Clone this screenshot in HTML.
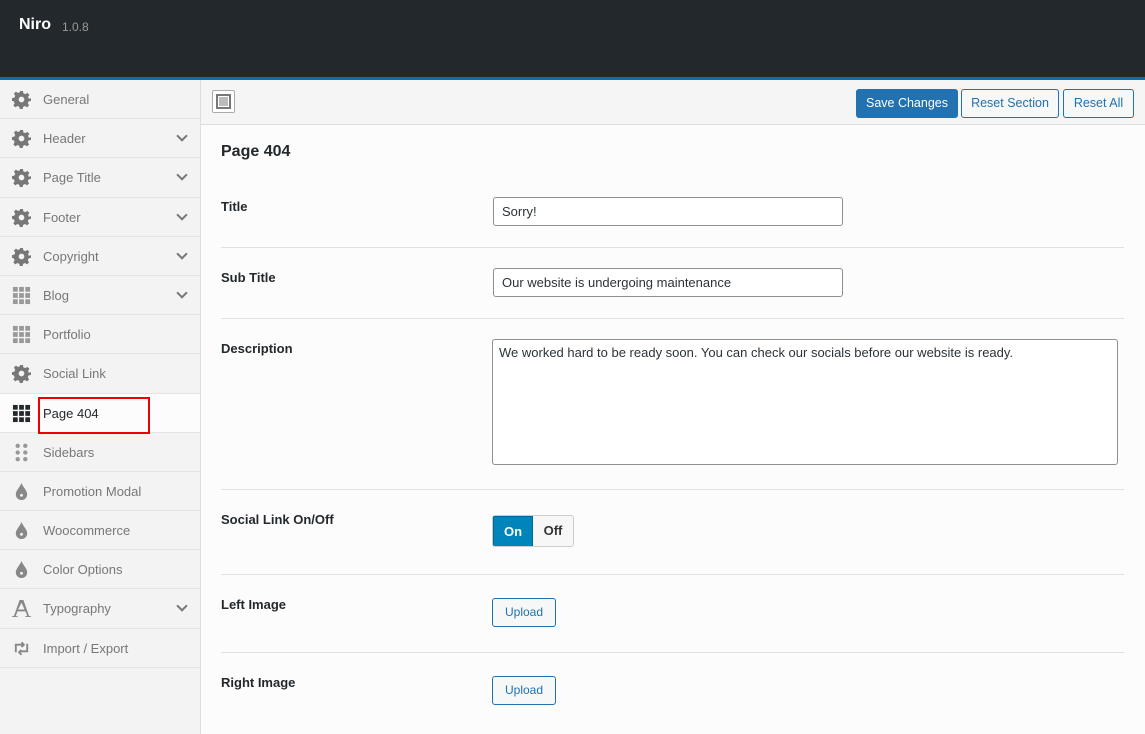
<!DOCTYPE html>
<html><head><style>
*{box-sizing:border-box;margin:0;padding:0}
body{width:1145px;height:734px;overflow:hidden;font-family:"Liberation Sans",sans-serif;font-size:13px;background:#fcfcfc;position:relative;color:#23282d}
.top{position:absolute;left:0;top:0;width:1145px;height:80px;background:#23282d;border-bottom:3px solid #0073aa}
.top b{position:absolute;left:19px;top:16px;color:#fff;font-size:16px}
.top span{position:absolute;left:62px;top:20px;color:#999;font-size:12px}
.side{position:absolute;left:0;top:80px;width:201px;height:654px;background:#f3f3f3;border-right:1px solid #ddd}
.it{height:39.2px;border-bottom:1px solid #e4e4e4;position:relative;color:#777;line-height:39px;padding-left:43px}
.it.act{background:#fcfcfc;color:#23282d}
.ic{position:absolute;left:12px;top:10px;width:19px;height:19px}
.chev{position:absolute;left:178px;top:13px;width:8px;height:8px;border-right:2px solid #777;border-bottom:2px solid #777;transform:rotate(45deg)}
.tb{position:absolute;left:201px;top:80px;right:0;height:45px;background:#f5f5f5;border-bottom:1px solid #ddd}
.btn{position:absolute;top:9px;height:29px;border:1px solid #2271b1;border-radius:3px;color:#2271b1;background:#f6f7f7;font-size:12.5px;line-height:27px;text-align:center}
.lab{position:absolute;left:221px;font-weight:bold;font-size:13px;color:#23282d}
.hr{position:absolute;left:221px;right:21px;height:1px;background:#e1e1e1}
.inp{position:absolute;left:493px;width:350px;height:29px;border:1px solid #8c8f94;border-radius:3px;background:#fff;padding:0 8px;line-height:27px;color:#2c3338}
.up{position:absolute;left:492px;width:64px;height:29px;border:1px solid #2271b1;border-radius:3px;color:#2271b1;background:#f6f7f7;text-align:center;line-height:27px;font-size:12px}
</style></head><body>
<div class="top"><b>Niro</b><span>1.0.8</span></div>
<div class="side">
<div class="it"><svg class="ic" viewBox="0 0 20 20"><path fill="#777" d="M8.5 1h3l.5 2.5 2 .9 2.2-1.4 2.1 2.1-1.4 2.2.9 2L20 8.5v3l-2.5.5-.9 2 1.4 2.2-2.1 2.1-2.2-1.4-2 .9-.5 2.5h-3l-.5-2.5-2-.9-2.2 1.4-2.1-2.1 1.4-2.2-.9-2L0 11.5v-3l2.5-.5.9-2L2 3.8 4.1 1.7l2.2 1.4 2-.9zM10 7a3 3 0 100 6 3 3 0 000-6z"/></svg>General</div>
<div class="it"><svg class="ic" viewBox="0 0 20 20"><path fill="#777" d="M8.5 1h3l.5 2.5 2 .9 2.2-1.4 2.1 2.1-1.4 2.2.9 2L20 8.5v3l-2.5.5-.9 2 1.4 2.2-2.1 2.1-2.2-1.4-2 .9-.5 2.5h-3l-.5-2.5-2-.9-2.2 1.4-2.1-2.1 1.4-2.2-.9-2L0 11.5v-3l2.5-.5.9-2L2 3.8 4.1 1.7l2.2 1.4 2-.9zM10 7a3 3 0 100 6 3 3 0 000-6z"/></svg>Header<i class="chev"></i></div>
<div class="it"><svg class="ic" viewBox="0 0 20 20"><path fill="#777" d="M8.5 1h3l.5 2.5 2 .9 2.2-1.4 2.1 2.1-1.4 2.2.9 2L20 8.5v3l-2.5.5-.9 2 1.4 2.2-2.1 2.1-2.2-1.4-2 .9-.5 2.5h-3l-.5-2.5-2-.9-2.2 1.4-2.1-2.1 1.4-2.2-.9-2L0 11.5v-3l2.5-.5.9-2L2 3.8 4.1 1.7l2.2 1.4 2-.9zM10 7a3 3 0 100 6 3 3 0 000-6z"/></svg>Page Title<i class="chev"></i></div>
<div class="it"><svg class="ic" viewBox="0 0 20 20"><path fill="#777" d="M8.5 1h3l.5 2.5 2 .9 2.2-1.4 2.1 2.1-1.4 2.2.9 2L20 8.5v3l-2.5.5-.9 2 1.4 2.2-2.1 2.1-2.2-1.4-2 .9-.5 2.5h-3l-.5-2.5-2-.9-2.2 1.4-2.1-2.1 1.4-2.2-.9-2L0 11.5v-3l2.5-.5.9-2L2 3.8 4.1 1.7l2.2 1.4 2-.9zM10 7a3 3 0 100 6 3 3 0 000-6z"/></svg>Footer<i class="chev"></i></div>
<div class="it"><svg class="ic" viewBox="0 0 20 20"><path fill="#777" d="M8.5 1h3l.5 2.5 2 .9 2.2-1.4 2.1 2.1-1.4 2.2.9 2L20 8.5v3l-2.5.5-.9 2 1.4 2.2-2.1 2.1-2.2-1.4-2 .9-.5 2.5h-3l-.5-2.5-2-.9-2.2 1.4-2.1-2.1 1.4-2.2-.9-2L0 11.5v-3l2.5-.5.9-2L2 3.8 4.1 1.7l2.2 1.4 2-.9zM10 7a3 3 0 100 6 3 3 0 000-6z"/></svg>Copyright<i class="chev"></i></div>
<div class="it"><svg class="ic" viewBox="0 0 20 20" fill="#999"><rect x="1" y="1" width="5" height="5"/><rect x="7.5" y="1" width="5" height="5"/><rect x="14" y="1" width="5" height="5"/><rect x="1" y="7.5" width="5" height="5"/><rect x="7.5" y="7.5" width="5" height="5"/><rect x="14" y="7.5" width="5" height="5"/><rect x="1" y="14" width="5" height="5"/><rect x="7.5" y="14" width="5" height="5"/><rect x="14" y="14" width="5" height="5"/></svg>Blog<i class="chev"></i></div>
<div class="it"><svg class="ic" viewBox="0 0 20 20" fill="#999"><rect x="1" y="1" width="5" height="5"/><rect x="7.5" y="1" width="5" height="5"/><rect x="14" y="1" width="5" height="5"/><rect x="1" y="7.5" width="5" height="5"/><rect x="7.5" y="7.5" width="5" height="5"/><rect x="14" y="7.5" width="5" height="5"/><rect x="1" y="14" width="5" height="5"/><rect x="7.5" y="14" width="5" height="5"/><rect x="14" y="14" width="5" height="5"/></svg>Portfolio</div>
<div class="it"><svg class="ic" viewBox="0 0 20 20"><path fill="#777" d="M8.5 1h3l.5 2.5 2 .9 2.2-1.4 2.1 2.1-1.4 2.2.9 2L20 8.5v3l-2.5.5-.9 2 1.4 2.2-2.1 2.1-2.2-1.4-2 .9-.5 2.5h-3l-.5-2.5-2-.9-2.2 1.4-2.1-2.1 1.4-2.2-.9-2L0 11.5v-3l2.5-.5.9-2L2 3.8 4.1 1.7l2.2 1.4 2-.9zM10 7a3 3 0 100 6 3 3 0 000-6z"/></svg>Social Link</div>
<div class="it act"><svg class="ic" viewBox="0 0 20 20" fill="#23282d"><rect x="1" y="1" width="5" height="5"/><rect x="7.5" y="1" width="5" height="5"/><rect x="14" y="1" width="5" height="5"/><rect x="1" y="7.5" width="5" height="5"/><rect x="7.5" y="7.5" width="5" height="5"/><rect x="14" y="7.5" width="5" height="5"/><rect x="1" y="14" width="5" height="5"/><rect x="7.5" y="14" width="5" height="5"/><rect x="14" y="14" width="5" height="5"/></svg>Page 404<div style="position:absolute;left:38px;top:3px;width:112px;height:37px;border:2px solid #e00"></div></div>
<div class="it"><svg class="ic" viewBox="0 0 20 20" fill="#999"><circle cx="6" cy="3" r="2.3"/><circle cx="14" cy="3" r="2.3"/><circle cx="6" cy="10" r="2.3"/><circle cx="14" cy="10" r="2.3"/><circle cx="6" cy="17" r="2.3"/><circle cx="14" cy="17" r="2.3"/></svg>Sidebars</div>
<div class="it"><svg class="ic" viewBox="0 0 20 20"><path fill="#888" d="M10 1C8 6 4 9 4 13a6 6 0 0012 0c0-4-4-7-6-12z"/><circle cx="10" cy="14" r="1.5" fill="#f3f3f3"/></svg>Promotion Modal</div>
<div class="it"><svg class="ic" viewBox="0 0 20 20"><path fill="#888" d="M10 1C8 6 4 9 4 13a6 6 0 0012 0c0-4-4-7-6-12z"/><circle cx="10" cy="14" r="1.5" fill="#f3f3f3"/></svg>Woocommerce</div>
<div class="it"><svg class="ic" viewBox="0 0 20 20"><path fill="#888" d="M10 1C8 6 4 9 4 13a6 6 0 0012 0c0-4-4-7-6-12z"/><circle cx="10" cy="14" r="1.5" fill="#f3f3f3"/></svg>Color Options</div>
<div class="it"><svg class="ic" viewBox="0 0 20 20"><path fill="#888" d="M8 1h4l6 17h2v1h-6v-1h2l-1.7-5H5.7L4 18h2v1H0v-1h2zM10 4l-3.6 7h6.8z"/></svg>Typography<i class="chev"></i></div>
<div class="it"><svg class="ic" viewBox="0 0 20 20" fill="none" stroke="#888" stroke-width="2"><path d="M4 14V6h8M10 3.5l2.5 2.5-2.5 2.5M16 5v8H8M10 16.5l-2.5-2.5 2.5-2.5"/></svg>Import / Export</div>
</div>
<div class="tb">
<div style="position:absolute;left:11px;top:10px;width:23px;height:23px;border:1px solid #aaa;border-radius:2px;background:#fff"><div style="margin:3px;width:15px;height:15px;border:2px solid #777;background:#fff"><div style="margin:1px;width:9px;height:9px;background:#bbb"></div></div></div>
<div class="btn" style="left:655px;width:102px;background:#2271b1;color:#fff">Save Changes</div>
<div class="btn" style="left:760px;width:98px">Reset Section</div>
<div class="btn" style="left:862px;width:71px">Reset All</div>
</div>
<div style="position:absolute;left:221px;top:143px;font-size:16px;font-weight:600">Page 404</div>
<div class="lab" style="top:199px">Title</div>
<div class="inp" style="top:197px">Sorry!</div>
<div class="hr" style="top:247px"></div>
<div class="lab" style="top:270px">Sub Title</div>
<div class="inp" style="top:268px">Our website is undergoing maintenance</div>
<div class="hr" style="top:318px"></div>
<div class="lab" style="top:341px">Description</div>
<div class="inp" style="top:339px;left:492px;width:626px;height:126px;line-height:18px;padding:4px 6px">We worked hard to be ready soon. You can check our socials before our website is ready.</div>
<div class="hr" style="top:489px"></div>
<div class="lab" style="top:512px">Social Link On/Off</div>
<div style="position:absolute;left:492px;top:515px;width:82px;height:32px;border:1px solid #ccc;border-radius:3px;background:#f7f7f7;overflow:hidden;font-weight:bold">
<div style="position:absolute;left:0;top:0;width:40px;height:31px;background:#0085ba;border:1px solid #006799;color:#fff;text-align:center;line-height:29px">On</div>
<div style="position:absolute;left:40px;top:0;width:40px;text-align:center;line-height:30px;color:#333">Off</div></div>
<div class="hr" style="top:574px"></div>
<div class="lab" style="top:597px">Left Image</div>
<div class="up" style="top:598px">Upload</div>
<div class="hr" style="top:652px"></div>
<div class="lab" style="top:675px">Right Image</div>
<div class="up" style="top:676px">Upload</div>
</body></html>
